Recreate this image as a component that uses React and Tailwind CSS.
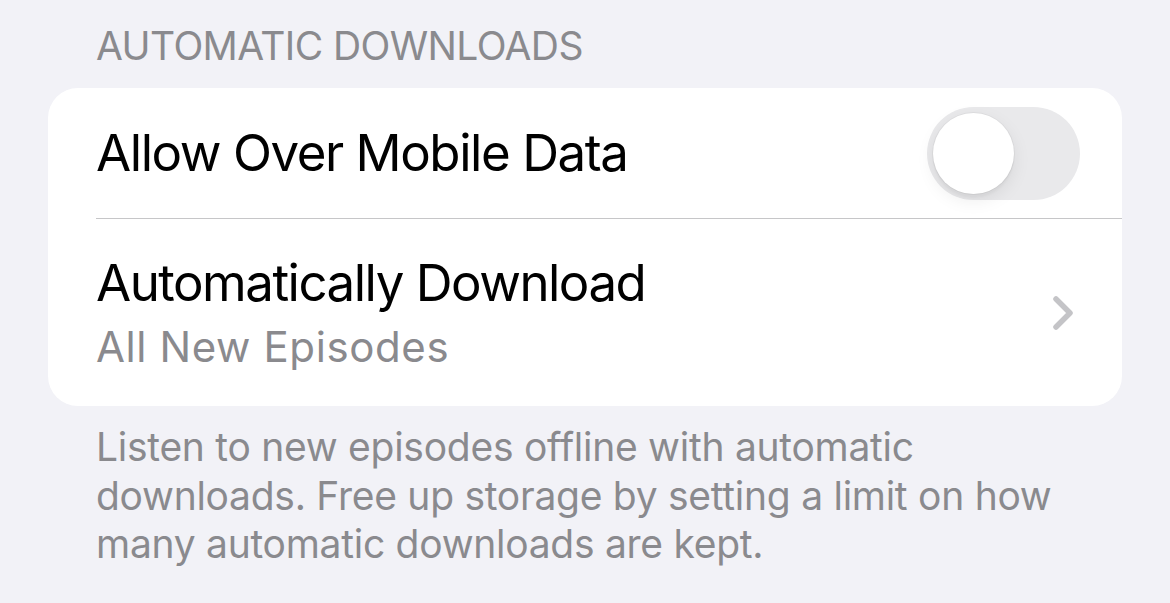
export default function App() {
  return (
    <div
      className="w-[1170px] h-[603px] bg-[#f2f2f7] overflow-hidden"
      style={{ fontFamily: 'Inter, "Noto Sans", sans-serif' }}
    >
      <div className="pt-[22px] pl-[96px] text-[39px] leading-[48px] tracking-[-0.6px] text-[#8a8a8e] uppercase">
        Automatic Downloads
      </div>

      <div className="mx-[48px] mt-[18px] bg-white rounded-[30px]">
        <div className="h-[130px] flex items-center justify-between pl-[48px] pr-[42px]">
          <span className="text-[51px] leading-[1.21] tracking-[-1.45px] text-black">Allow Over Mobile Data</span>
          <button className="relative w-[153px] h-[93px] rounded-full bg-[#e9e9eb]">
            <span className="absolute left-[6px] top-[6px] w-[81px] h-[81px] rounded-full bg-white shadow-[0_6px_18px_rgba(0,0,0,0.08),0_4px_2px_rgba(0,0,0,0.03),0_0_0_1px_rgba(0,0,0,0.04)]" />
          </button>
        </div>

        <div className="ml-[48px] h-px bg-[#c6c6c8]" />

        <div className="h-[187px] flex items-center justify-between pl-[48px] pr-[48px]">
          <div className="flex flex-col gap-[8px]">
            <span className="text-[51px] leading-[60px] tracking-[-1.5px] text-black">Automatically Download</span>
            <span className="text-[42px] leading-[52px] tracking-[0.6px] text-[#8a8a8e]">All New Episodes</span>
          </div>
          <svg width="22" height="36" viewBox="0 0 22 36" fill="none">
            <path
              d="M4 4 L18 18 L4 32"
              stroke="#c4c4c7"
              strokeWidth="5.5"
              strokeLinecap="round"
              strokeLinejoin="round"
            />
          </svg>
        </div>
      </div>

      <p className="mt-[17px] pl-[96px] pr-[96px] text-[39px] leading-[48.5px] tracking-[-0.27px] text-[#8a8a8e]">
        Listen to new episodes offline with automatic downloads. Free up storage by setting a limit on how many automatic downloads are kept.
      </p>
    </div>
  );
}
